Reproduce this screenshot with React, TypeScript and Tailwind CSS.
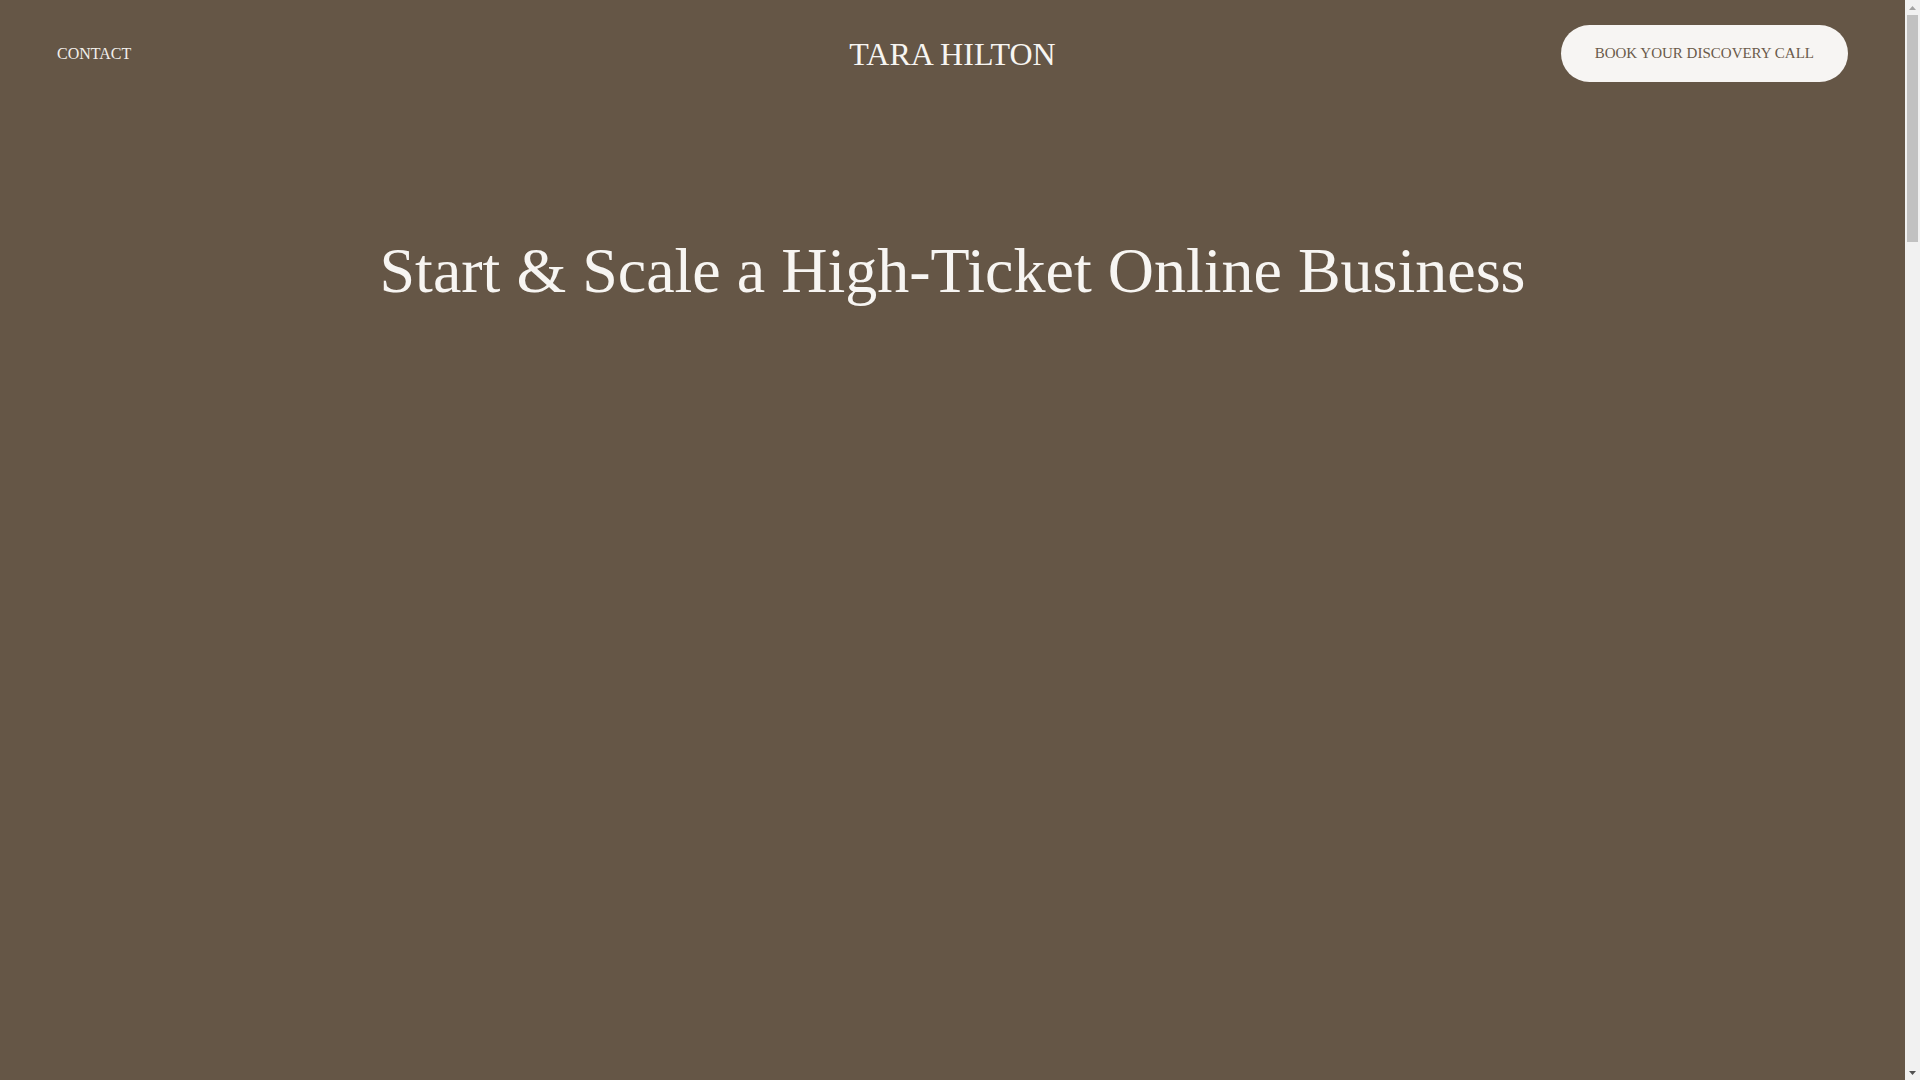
function FakeScrollbar() {
  // the reference shows a classic scrollbar at the right edge
  return (
    <aside className="sticky top-0 flex h-screen w-[15px] shrink-0 flex-col items-center bg-[#f1f1f1]">
      <div className="flex h-[15px] w-full items-center justify-center">
        <svg width="7" height="4" viewBox="0 0 7 4">
          <polygon points="3.5,0 7,4 0,4" fill="#a3a3a3" />
        </svg>
      </div>
      <div className="h-[227px] w-[11px] bg-[#c1c1c1]" />
      <div className="flex-1" />
      <div className="flex h-[15px] w-full items-center justify-center">
        <svg width="7" height="4" viewBox="0 0 7 4">
          <polygon points="0,0 7,0 3.5,4" fill="#505050" />
        </svg>
      </div>
    </aside>
  );
}

export default function App() {
  return (
    <div
      className="flex w-full items-start bg-[#655646] text-[#f7f5f2]"
      style={{ fontFamily: '"Liberation Serif", "Times New Roman", serif' }}
    >
      <div className="min-h-[5000px] min-w-0 flex-1">
        <header className="grid h-[107px] grid-cols-3 items-center px-[57px]">
          <nav className="flex items-center">
            <a href="#" className="text-[16px] uppercase text-[#f2efeb]">
              CONTACT
            </a>
          </nav>
          <div className="flex justify-center">
            <a href="#" className="text-[32px] whitespace-nowrap">
              TARA HILTON
            </a>
          </div>
          <div className="flex justify-end">
            <a
              href="#"
              className="flex h-[57px] items-center rounded-full bg-[#f7f5f3] px-[34px] text-[15px] whitespace-nowrap text-[#6a5a4a]"
            >
              BOOK YOUR DISCOVERY CALL
            </a>
          </div>
        </header>

        <main className="flex flex-col items-center pt-[126px]">
          <h1 className="text-center text-[64px] leading-[1.2] font-normal">
            Start &amp; Scale a High-Ticket Online Business
          </h1>
        </main>
      </div>
      <FakeScrollbar />
    </div>
  );
}
